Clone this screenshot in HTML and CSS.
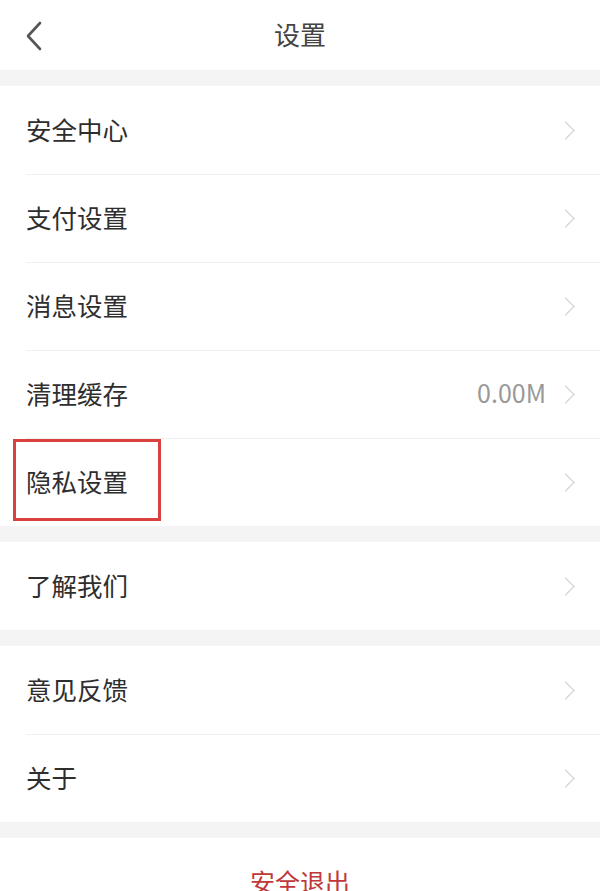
FILE: index.html
```html
<!DOCTYPE html>
<html lang="zh-CN">
<head>
    <meta charset="UTF-8">
    <meta name="viewport" content="width=device-width, initial-scale=1.0">
    <title>设置</title>
    <link rel="stylesheet" href="styles.css">
</head>
<body>
    <div class="header">
        <svg class="back" width="20" height="30" viewBox="0 0 20 30">
            <path d="M16 2 L4 15 L16 28" fill="none" stroke="#555" stroke-width="2.6" stroke-linecap="round" stroke-linejoin="round"/>
        </svg>
        <div class="title">设置</div>
    </div>

    <div class="group">
        <div class="row"><span class="label">安全中心</span><span class="arrow"></span></div>
        <div class="row"><span class="label">支付设置</span><span class="arrow"></span></div>
        <div class="row"><span class="label">消息设置</span><span class="arrow"></span></div>
        <div class="row"><span class="label">清理缓存</span><span class="value">0.00M</span><span class="arrow"></span></div>
        <div class="row marked"><span class="label">隐私设置</span><span class="arrow"></span></div>
    </div>

    <div class="group">
        <div class="row"><span class="label">了解我们</span><span class="arrow"></span></div>
    </div>

    <div class="group">
        <div class="row"><span class="label">意见反馈</span><span class="arrow"></span></div>
        <div class="row"><span class="label">关于</span><span class="arrow"></span></div>
    </div>

    <div class="logout">安全退出</div>
</body>
</html>
```

FILE: styles.css
```css
body {
    margin: 0;
    padding: 0;
    background: #f4f4f4;
    font-family: "Noto Sans CJK SC", "Noto Sans", sans-serif;
    color: #333;
}
.header {
    height: 70px;
    background: #fff;
    display: flex;
    align-items: center;
    justify-content: center;
    position: relative;
}
.header .back {
    position: absolute;
    left: 24px;
    top: 21px;
}
.title {
    font-size: 26px;
    color: #444;
    margin-top: -4px;
}
.group {
    background: #fff;
    margin-top: 16px;
}
.row {
    height: 88px;
    display: flex;
    align-items: center;
    padding: 0 28px 0 26px;
    position: relative;
}
.row + .row::before {
    content: "";
    position: absolute;
    top: 0;
    left: 26px;
    right: 0;
    height: 1px;
    background: #f0f0f0;
}
.label {
    font-size: 25.5px;
    flex-grow: 1;
    color: #2e2e2e;
    margin-top: -4px;
}
.value {
    font-size: 25px;
    color: #999;
    margin-right: 13px;
    margin-top: -4px;
}
.arrow {
    width: 12px;
    height: 12px;
    border-top: 1.5px solid #ccc;
    border-right: 1.5px solid #ccc;
    transform: rotate(45deg);
}
.marked::after {
    content: "";
    position: absolute;
    left: 13px;
    top: 1px;
    width: 142px;
    height: 76px;
    border: 3px solid #d9413f;
}
.logout {
    margin-top: 16px;
    background: #fff;
    height: 90px;
    display: flex;
    justify-content: center;
    align-items: flex-start;
    padding-top: 25px;
    box-sizing: border-box;
    font-size: 25px;
    color: #c0383a;
}
```
